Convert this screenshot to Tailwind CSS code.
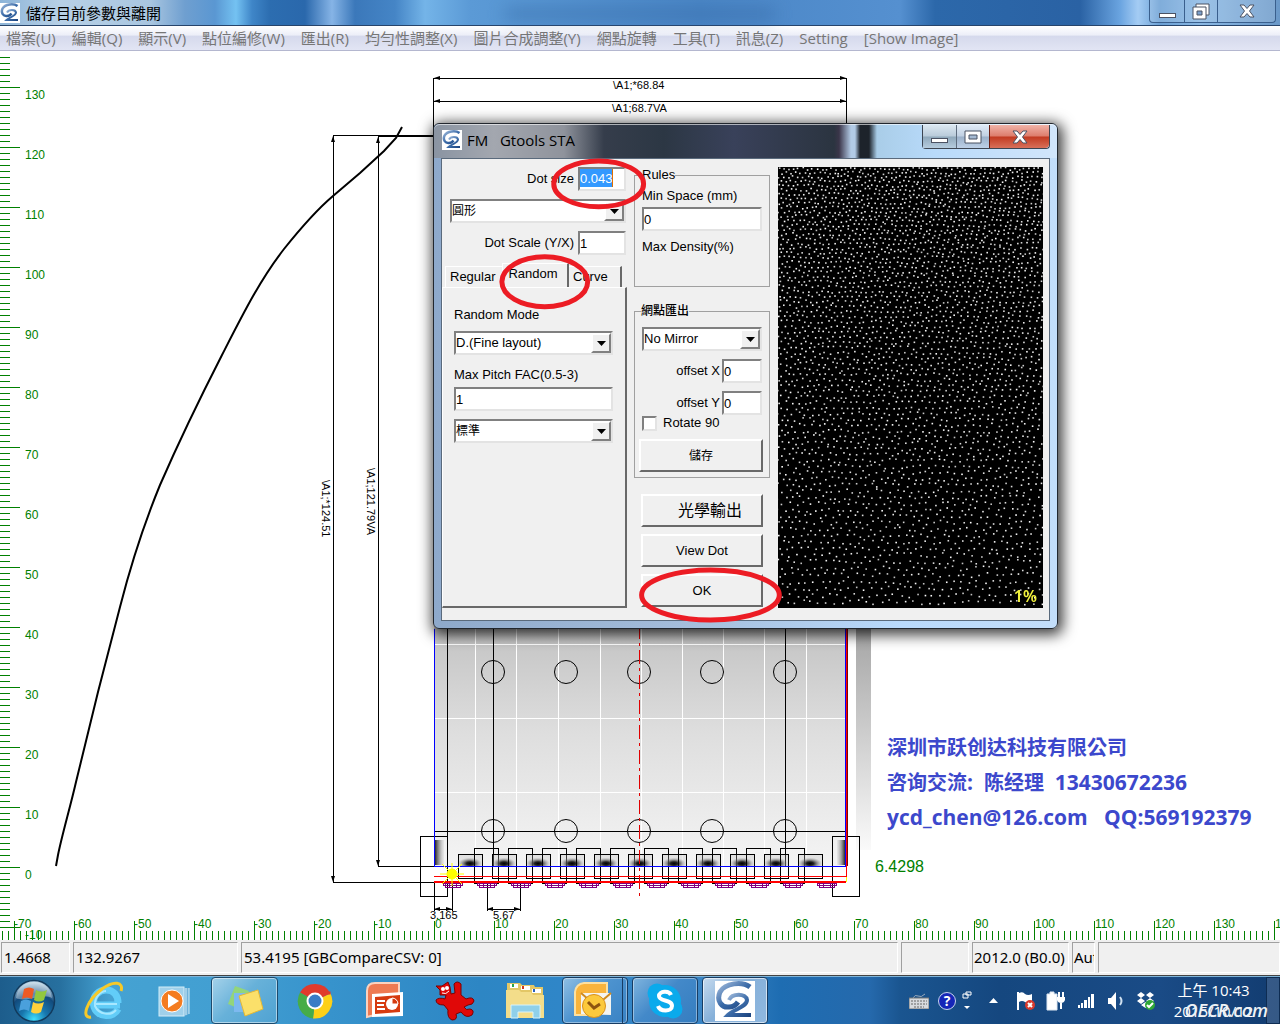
<!DOCTYPE html>
<html lang="zh-Hant">
<head>
    <meta charset="UTF-8">
    <meta name="viewport" content="width=device-width, initial-scale=1.0">
    <title>FM Gtools STA</title>
    <script src="https://cdn.jsdelivr.net/npm/@tailwindcss/browser@4"></script>
</head>
<body class="flex flex-col min-h-screen overflow-x-hidden bg-white font-['Open_Sans','Noto_Sans_CJK_TC',sans-serif] text-[15px] text-black">
    <svg class="hidden">
        <symbol id="g2" viewBox="0 0 40 40">
            <rect width="40" height="40" fill="#fff"/>
            <g fill="none" stroke="url(#g2fill)">
                <path stroke-width="5" d="M35 6C27 0 10 2 5 11C1 20 7 27 14 26C18 26 21 24 23 21"/>
                <path stroke-width="4" d="M14 19C17 12 31 12 32 19C32 26 19 28 13 34L36 34"/>
            </g>
        </symbol>
        <symbol id="cross" viewBox="0 0 16 14">
            <path d="M1 1H5L8 4.500L11 1H15L10.500 7L15 13H11L8 9.500L5 13H1L5.500 7Z" fill="#fff" stroke="#4b5263"/>
        </symbol>
    </svg>
    <svg class="absolute w-0 h-0">
        <linearGradient id="g2fill" x1="0" y1="0" x2="1" y2="1">
            <stop offset="0" stop-color="#9db8da"/><stop offset=".5" stop-color="#3b6ba8"/><stop offset="1" stop-color="#1c4480"/>
        </linearGradient>
    </svg>

    <!-- title bar -->
    <header class="relative flex items-center h-[26px] bg-[linear-gradient(90deg,#8db4d8_0px,#b7d0e6_60px,#a9c6e0_150px,#6f9fd0_185px,#5a97d2_215px,#74c2f2_236px,#3f86c8_252px,#2c6db0_270px,#2a68ac_305px,#86b4e6_332px,#3b78ba_355px,#4585c6_395px,#74b4e8_425px,#5b9ad6_470px,#4a86c6_700px,#5590d0_900px,#2c68aa_935px,#2a62a4_1080px,#6aa4e0_1120px,#a4ccf4_1138px,#6a9fd4_1160px,#8ab8e4_1200px,#6a98c8_1280px)] border-b border-[#27446b]">
        <span class="absolute left-[505px] top-2 w-[270px] h-3 bg-[#2c5f9c]/40 blur-sm"></span>
        <svg class="relative w-5 h-5"><use href="#g2"/></svg>
        <h1 class="relative ml-1.5 leading-6">儲存目前參數與離開</h1>
        <div class="relative flex self-start ml-auto mr-1 h-[23px] rounded-b border border-t-0 border-[#3a5f8d] bg-white/15">
            <button class="flex items-center justify-center w-[35px] pt-2 border-r border-[#3a5f8d]" aria-label="Minimize"><span class="w-[17px] h-[5px] bg-white border border-[#4b5263]"></span></button>
            <button class="flex items-center justify-center w-[33px] border-r border-[#3a5f8d]" aria-label="Restore">
                <svg class="w-[18px] h-[17px]" viewBox="0 0 18 17" fill="#fff" stroke="#4b5263"><path d="M4 1H17V12H4Z"/><path d="M1 4H14V16H1Z"/><path d="M5 8H10V12H5Z" fill="#7ba0cc"/></svg>
            </button>
            <button class="flex items-center justify-center w-[57px]" aria-label="Close"><svg class="w-4 h-3.5"><use href="#cross"/></svg></button>
        </div>
    </header>

    <!-- menu -->
    <nav class="flex gap-4 h-[25px] pl-1.5 leading-6 whitespace-nowrap text-[#767676] bg-[linear-gradient(#ffffff,#eceef8_38%,#d5d9ec_42%,#e2e5f4)] border-b border-[#b4b7cf]">
        <a href="#">檔案(U)</a>
        <a href="#">編輯(Q)</a>
        <a href="#">顯示(V)</a>
        <a href="#">點位編修(W)</a>
        <a href="#">匯出(R)</a>
        <a href="#">均勻性調整(X)</a>
        <a href="#">圖片合成調整(Y)</a>
        <a href="#">網點旋轉</a>
        <a href="#">工具(T)</a>
        <a href="#">訊息(Z)</a>
        <a href="#">Setting</a>
        <a href="#">[Show Image]</a>
    </nav>

    <main class="relative flex-1 min-h-[889px] overflow-hidden">
        <svg class="absolute inset-0 w-full h-full font-['Liberation_Sans',sans-serif]" viewBox="0 51 1280 890" preserveAspectRatio="xMinYMin slice">
            <defs>
                <linearGradient id="panel" x1="0" y1="0" x2="0" y2="1"><stop offset="0" stop-color="#bcbcbc"/><stop offset=".5" stop-color="#dedede"/><stop offset="1" stop-color="#f4f4f4"/></linearGradient>
                <linearGradient id="band" x1="0" y1="0" x2="0" y2="1"><stop offset="0" stop-color="#9a9a9a"/><stop offset="1" stop-color="#fafafa"/></linearGradient>
                <radialGradient id="led" cx=".5" cy=".8" r=".5"><stop offset="0" stop-color="#000"/><stop offset=".3" stop-color="#222"/><stop offset="1" stop-color="#bbb" stop-opacity=".3"/></radialGradient>
                <linearGradient id="endL"><stop offset="0" stop-color="#000"/><stop offset="1" stop-color="#bbb" stop-opacity=".2"/></linearGradient>
                <linearGradient id="endR"><stop offset="0" stop-color="#bbb" stop-opacity=".2"/><stop offset="1" stop-color="#000"/></linearGradient>
            </defs>
            <!-- light guide panel -->
            <rect x="434" y="600" width="412" height="266" fill="url(#panel)"/>
            <rect x="856" y="600" width="15" height="250" fill="url(#band)"/>
            <g stroke="#fff" stroke-width="1" shape-rendering="crispEdges">
                <path d="M475 600V866M516 600V866M558 600V866M600 600V866M641 600V866M682 600V866M723 600V866M764 600V866M806 600V866M434 644H846M434 718H846M434 792H846"/>
            </g>
            <g fill="none" stroke="#000" shape-rendering="crispEdges">
                <path d="M447 600V866M493 600V866M785 600V866M434 831H846"/>
                <path d="M420 836H447V896H420ZM832 836H859V896H832Z"/>
                <path d="M333 882V135H434M378 136V866H434M333 882H434M434 78H846M434 101H846M433 78V136M846 78V136"/>
                <path d="M378 136H434" stroke-width="2"/>
                <path d="M434 882V911M452 884V911M434 909H452M487 882V911M520 882V911M487 909H520"/>
            </g>
            <g fill="none" stroke="#000">
                <circle cx="493" cy="672" r="11.500"/><circle cx="566" cy="672" r="11.500"/><circle cx="639" cy="672" r="11.500"/><circle cx="712" cy="672" r="11.500"/><circle cx="785" cy="672" r="11.500"/>
                <circle cx="493" cy="831" r="11.500"/><circle cx="566" cy="831" r="11.500"/><circle cx="639" cy="831" r="11.500"/><circle cx="712" cy="831" r="11.500"/><circle cx="785" cy="831" r="11.500"/>
                <path stroke-width="2" d="M56 866L58 855C62 835 70 808 76 782L98 692L120 607C132 560 144 524 160 485C184 430 200 398 222 355C244 312 260 280 284 249C304 224 320 207 333 196L360 173L384 151L396 138L402 127"/>
            </g>
            <path d="M434 78l6 -2v4zM434 101l6 -2v4zM846 78l-6 -2v4zM846 101l-6 -2v4zM333 136l-2 6h4zM378 137l-2 6h4zM333 882l-2 -6h4zM378 866l-2 -6h4zM434 909l6 -2v4zM452 909l-6 -2v4zM487 909l6 -2v4zM520 909l-6 -2v4z"/>
            <rect x="434" y="840" width="10" height="25" fill="url(#endL)"/>
            <rect x="837" y="840" width="9" height="25" fill="url(#endR)"/>
            <g id="leds" fill="none" shape-rendering="crispEdges"></g>
            <g fill="none" shape-rendering="crispEdges">
                <path d="M639 600V900" stroke="#e00000" stroke-dasharray="14 4 3 4"/>
                <path d="M434 629V866H846" stroke="#00f"/>
                <path d="M434 876H847" stroke="#f00"/>
                <path d="M434 882H846" stroke="#f00" stroke-width="2"/>
            </g>
            <rect x="845" y="600" width="1" height="266" fill="#00f"/>
            <rect x="847" y="600" width="1" height="266" fill="#800000"/>
            <rect x="846" y="600" width="1" height="277" fill="#f00"/>
            <rect x="846" y="877" width="1" height="5" fill="#ff0"/>
            <g stroke="#ff0"><circle cx="452" cy="874" r="5" fill="#ff0"/><path d="M440 874H464M452 863V886M442 864L462 884M462 864L442 884"/></g>
            <g font-size="11">
                <text x="613" y="89">\A1;*68.84</text>
                <text x="612" y="112">\A1;68.7VA</text>
                <text transform="translate(322 480) rotate(90)">\A1;*124.51</text>
                <text transform="translate(367 468) rotate(90)">\A1;121.79VA</text>
                <text x="430" y="919">3.165</text>
                <text x="493" y="919">5.67</text>
            </g>
            <g id="rulers" fill="#008000" font-size="12"></g>
            <text x="875" y="872" font-size="16" fill="#008000">6.4298</text>
        </svg>

        <address class="absolute left-[887px] top-[679px] not-italic font-bold text-xl leading-[35px] whitespace-pre text-[#3c48cc] font-['Open_Sans','Noto_Sans_CJK_SC',sans-serif]">深圳市跃创达科技有限公司
咨询交流<span class="text-[21px]">:  </span>陈经理<span class="text-[21px]">  13430672236
ycd_chen@126.com   QQ:569192379</span></address>

        <!-- dialog -->
        <section class="absolute left-[433px] top-[72px] w-[625px] rounded-md border border-[#22272e] bg-[linear-gradient(90deg,#8ea9cb,#a4bddb_40%,#b9dafc_75%,#c3defa)] shadow-[2px_3px_14px_3px_rgba(0,0,0,0.75)] font-['Liberation_Sans','Noto_Sans_CJK_TC',sans-serif] text-[13px] leading-4">
            <header class="flex items-center h-[34px] pl-2 pr-[7px] pb-[3px] rounded-t-md border-t border-white/60 bg-[linear-gradient(90deg,#8a94a2_0px,#a3a7af_60px,#8f939c_130px,#353d4b_170px,#2c3744_230px,#39415a_300px,#2b3440_400px,#3a3549_405px,#b2cbe6_417px,#b2cbe6_421px,#1d232b_426px,#1d232b_435px,#a9cde8_443px,#b8dafa_500px,#d2e6fb_624px)] font-['Open_Sans',sans-serif] text-[15px]">
                <svg class="w-5 h-5"><use href="#g2"/></svg>
                <h2 class="ml-[5px] whitespace-pre">FM   Gtools STA</h2>
                <div class="flex self-start ml-auto h-6 rounded-b border border-t-0 border-[#3c4552]">
                    <button class="flex items-center justify-center w-[34px] pt-2 bg-[linear-gradient(#dbe7f1,#b9cbda_48%,#8fa8bb_52%,#b6ccde)] border-r border-[#5d6c7e]" aria-label="Minimize"><span class="w-[17px] h-[5px] bg-white border border-[#4b5263]"></span></button>
                    <button class="flex items-center justify-center w-8 bg-[linear-gradient(#dfeaf6,#c0d0e2_48%,#9bb1ca_52%,#bdd0e6)]" aria-label="Maximize">
                        <svg class="w-[18px] h-[14px]" viewBox="0 0 18 14" fill="#fff" stroke="#4b5263"><path d="M1 1H17V13H1Z"/><path d="M5 5H13V9H5Z" fill="#a5bad2"/></svg>
                    </button>
                    <button class="flex items-center justify-center w-[60px] rounded-br border-l border-[#6b1c10] bg-[linear-gradient(#f0b3a8,#dd7d6c_48%,#c23a21_52%,#d8705a)]" aria-label="Close"><svg class="w-4 h-3.5"><use href="#cross"/></svg></button>
                </div>
            </header>
            <form class="flex h-[463px] mx-[7px] mb-[7px] pt-2 border border-[#5a6a7c] bg-[#f0f0f0]">
                <div class="flex flex-col w-[192px]">
                    <div class="flex flex-col gap-2 pl-2 pr-2">
                        <div class="flex items-center justify-end gap-1">
                            <label for="dotsize">Dot size</label>
                            <div class="flex w-12 h-6 border-2 border-t-[#808080] border-l-[#808080] border-r-[#e3e3e3] border-b-[#e3e3e3] bg-white"><input id="dotsize" type="text" value="0.043" class="w-[33px] h-[18px] bg-[#3399ff] text-white border-r border-[#e07000] outline-none"></div>
                        </div>
                        <div class="flex h-6 border-2 border-t-[#808080] border-l-[#808080] border-r-[#e3e3e3] border-b-[#e3e3e3] bg-white">
                            <select aria-label="Dot shape" class="flex-1 appearance-none text-xs outline-none"><option>圓形</option></select>
                            <span class="flex items-center justify-center w-5 border-2 border-t-white border-l-white border-r-[#808080] border-b-[#808080] bg-[#f0f0f0]"><svg class="w-[9px] h-[5px]"><path d="M0 0H9L4.500 5Z"/></svg></span>
                        </div>
                        <div class="flex items-center justify-end gap-1">
                            <label for="scale">Dot Scale (Y/X)</label>
                            <input id="scale" type="text" value="1" class="w-12 h-6 border-2 border-t-[#808080] border-l-[#808080] border-r-[#e3e3e3] border-b-[#e3e3e3] bg-white">
                        </div>
                    </div>
                    <div class="flex items-end h-6 mt-2 pl-[3px]">
                        <button type="button" class="w-[57px] h-[21px] pl-1 text-left border-t border-l border-white">Regular</button>
                        <button type="button" class="w-[67px] h-6 pb-1 pr-1 border-t border-l border-white border-r-2 border-r-[#696969]">Random</button>
                        <button type="button" class="w-[53px] h-[21px] pl-1 text-left border-t border-white border-r-2 border-r-[#696969]">Curve</button>
                    </div>
                    <div class="flex flex-col h-[321px] w-[185px] pl-[11px] pr-3 pt-[19px] border-t border-l border-white border-r-2 border-r-[#696969] border-b-2 border-b-[#696969]">
                        <label for="mode">Random Mode</label>
                        <div class="flex h-6 mt-2 border-2 border-t-[#808080] border-l-[#808080] border-r-[#e3e3e3] border-b-[#e3e3e3] bg-white">
                            <select id="mode" class="flex-1 appearance-none outline-none"><option>D.(Fine layout)</option></select>
                            <span class="flex items-center justify-center w-5 border-2 border-t-white border-l-white border-r-[#808080] border-b-[#808080] bg-[#f0f0f0]"><svg class="w-[9px] h-[5px]"><path d="M0 0H9L4.500 5Z"/></svg></span>
                        </div>
                        <label for="pitch" class="mt-3">Max Pitch FAC(0.5-3)</label>
                        <input id="pitch" type="text" value="1" class="h-6 mt-1 border-2 border-t-[#808080] border-l-[#808080] border-r-[#e3e3e3] border-b-[#e3e3e3] bg-white">
                        <div class="flex h-6 mt-2 border-2 border-t-[#808080] border-l-[#808080] border-r-[#e3e3e3] border-b-[#e3e3e3] bg-white">
                            <select aria-label="Standard" class="flex-1 appearance-none text-xs outline-none"><option>標準</option></select>
                            <span class="flex items-center justify-center w-5 border-2 border-t-white border-l-white border-r-[#808080] border-b-[#808080] bg-[#f0f0f0]"><svg class="w-[9px] h-[5px]"><path d="M0 0H9L4.500 5Z"/></svg></span>
                        </div>
                    </div>
                </div>
                <div class="flex flex-col w-[136px]">
                    <fieldset class="flex flex-col h-[120px] px-[7px] border border-[#a0a0a0]">
                        <legend>Rules</legend>
                        <label for="space" class="block mt-[5px]">Min Space (mm)</label>
                        <input id="space" type="text" value="0" class="block w-full h-6 mt-[3px] border-2 border-t-[#808080] border-l-[#808080] border-r-[#e3e3e3] border-b-[#e3e3e3] bg-white">
                        <p class="mt-2">Max Density(%)</p>
                    </fieldset>
                    <fieldset class="h-[175px] mt-4 px-1 border border-[#a0a0a0]">
                        <legend class="ml-0.5 text-xs leading-4 font-medium">網點匯出</legend>
                        <div class="flex h-6 mx-[3px] mt-2 border-2 border-t-[#808080] border-l-[#808080] border-r-[#e3e3e3] border-b-[#e3e3e3] bg-white">
                            <select aria-label="Mirror" class="flex-1 appearance-none outline-none"><option>No Mirror</option></select>
                            <span class="flex items-center justify-center w-5 border-2 border-t-white border-l-white border-r-[#808080] border-b-[#808080] bg-[#f0f0f0]"><svg class="w-[9px] h-[5px]"><path d="M0 0H9L4.500 5Z"/></svg></span>
                        </div>
                        <div class="flex items-center justify-end gap-0.5 mx-[3px] mt-2">
                            <label for="offx">offset X</label>
                            <input id="offx" type="text" value="0" class="w-10 h-6 border-2 border-t-[#808080] border-l-[#808080] border-r-[#e3e3e3] border-b-[#e3e3e3] bg-white">
                        </div>
                        <div class="flex items-center justify-end gap-0.5 mx-[3px] mt-2">
                            <label for="offy">offset Y</label>
                            <input id="offy" type="text" value="0" class="w-10 h-6 border-2 border-t-[#808080] border-l-[#808080] border-r-[#e3e3e3] border-b-[#e3e3e3] bg-white">
                        </div>
                        <div class="flex items-center gap-1.5 ml-[3px]">
                            <input id="rot" type="checkbox" class="appearance-none w-[15px] h-[15px] border-2 border-t-[#808080] border-l-[#808080] border-r-[#e3e3e3] border-b-[#e3e3e3] bg-white">
                            <label for="rot">Rotate 90</label>
                        </div>
                        <button type="button" class="w-[124px] h-[33px] mt-2 text-xs border-2 border-t-white border-l-white border-r-[#696969] border-b-[#696969]">儲存</button>
                    </fieldset>
                    <div class="flex flex-col gap-[7px] mt-4 pl-[7px] pr-[7px]">
                        <button type="button" class="h-[33px] pl-4 text-base border-2 border-t-white border-l-white border-r-[#696969] border-b-[#696969]">光學輸出</button>
                        <button type="button" class="h-[33px] border-2 border-t-white border-l-white border-r-[#696969] border-b-[#696969]">View Dot</button>
                        <button type="button" class="h-[33px] border-2 border-t-white border-l-white border-r-[#696969] border-b-[#696969]">OK</button>
                    </div>
                </div>
                <div class="relative w-[265px] h-[441px] ml-2 bg-black">
                    <canvas id="dots" width="265" height="441" class="block"></canvas>
                    <span class="absolute right-1.5 bottom-1 font-['Noto_Sans',sans-serif] font-semibold text-base leading-4 text-[#f0f03c]">1%</span>
                </div>
            </form>
            <svg class="absolute left-0 top-0 w-full h-full pointer-events-none" viewBox="434 124 623 505" fill="none" stroke="#ec1c24" stroke-width="5" preserveAspectRatio="xMinYMin">
                <ellipse cx="599" cy="184" rx="45" ry="23"/>
                <ellipse cx="545" cy="282" rx="43" ry="25"/>
                <ellipse cx="711" cy="596" rx="69" ry="25"/>
            </svg>
        </section>
    </main>

    <!-- status bar -->
    <div class="flex gap-[3px] h-9 pt-0.5 pb-0.5 pl-px bg-[#f0f0f0] font-['Noto_Sans',sans-serif] leading-[29px] whitespace-nowrap border-b border-[#444]">
        <div class="w-[69px] pl-0.5 border border-t-[#a0a0a0] border-l-[#a0a0a0] border-r-white border-b-white">1.4668</div>
        <div class="w-[165px] pl-0.5 border border-t-[#a0a0a0] border-l-[#a0a0a0] border-r-white border-b-white">132.9267</div>
        <div class="flex-1 pl-0.5 border border-t-[#a0a0a0] border-l-[#a0a0a0] border-r-white border-b-white">53.4195 [GBCompareCSV: 0]</div>
        <div class="w-[68px] border border-t-[#a0a0a0] border-l-[#a0a0a0] border-r-white border-b-white"></div>
        <div class="w-[97px] pl-px border border-t-[#a0a0a0] border-l-[#a0a0a0] border-r-white border-b-white">2012.0 (B0.0)</div>
        <div class="w-[23px] overflow-hidden pl-px border border-t-[#a0a0a0] border-l-[#a0a0a0] border-r-white border-b-white">Aut</div>
        <div class="w-[182px] border border-t-[#a0a0a0] border-l-[#a0a0a0] border-r-white border-b-white"></div>
    </div>

    <!-- taskbar -->
    <footer class="flex gap-1 h-12 bg-[linear-gradient(90deg,#1d5d8c_0px,#27709f_60px,#45a2d2_110px,#429fd2_220px,#3793cc_330px,#2d86c4_480px,#2f86c8_560px,#3a84c4_720px,#1e6db2_780px,#2569ac_870px,#1a5590_900px,#15477f_1000px,#1a4b86_1160px,#123c70_1280px)] border-t border-[#7fb4d8]">
        <button class="flex items-center justify-center w-[67px]" aria-label="Start">
            <svg class="w-11 h-11" viewBox="0 0 44 44">
                <defs><radialGradient id="orb" cx=".5" cy=".95" r=".9"><stop offset="0" stop-color="#3fe0ff"/><stop offset=".35" stop-color="#1877ae"/><stop offset=".7" stop-color="#124a7c"/><stop offset="1" stop-color="#b0cde0"/></radialGradient></defs>
                <circle cx="22" cy="22" r="20.500" fill="url(#orb)" stroke="#123a5c" stroke-width="1.500"/>
                <path d="M4 19C5 8 14 3 22 3S39 8 40 19C30 14 14 24 4 19Z" fill="#fff" opacity=".35"/>
                <path d="M12 10Q17 7 22 10L20 20Q15 17 10 20Z" fill="#ee5a24"/><path d="M24 11Q29 14 35 11L32 21Q27 24 22 21Z" fill="#92c83e"/>
                <path d="M9 22Q14 19 19 22L17 32Q12 29 7 32Z" fill="#4aa0dc"/><path d="M21 23Q26 26 32 23L29 33Q24 36 19 33Z" fill="#fdd03b"/>
            </svg>
        </button>
        <button class="flex items-center justify-center w-[66px]" aria-label="Internet Explorer">
            <svg class="w-10 h-10" viewBox="0 0 40 40" fill="none">
                <path d="M36 24H12M34 28C30 37 14 37 10 26C7 14 16 9 22 9C30 9 34 15 34 22" stroke="#62cdf8" stroke-width="7"/>
                <path d="M33 23H12M32 29C27 35 15 34 11 25C10 16 17 10 22 10" stroke="#a8e8ff" stroke-width="2"/>
                <path d="M7 36C-3 38 2 20 18 8C30 -1 40 1 37 10" stroke="#f6c928" stroke-width="3"/>
            </svg>
        </button>
        <button class="flex items-center justify-center w-[66px]" aria-label="Media Player">
            <svg class="w-9 h-9" viewBox="0 0 36 36"><path d="M6 5H33V31L29 33H6Z" fill="#6fb1d8"/><path d="M30 5V32M33 5V31" stroke="#d4edf8"/><rect x="3" y="4" width="25" height="29" fill="#9fd0ea" stroke="#d4edf8"/><circle cx="16" cy="18" r="11" fill="#f47c20" stroke="#fff"/><path d="M12 11L23 18L12 25Z" fill="#fff"/></svg>
        </button>
        <button class="flex items-center justify-center w-[67px] rounded-sm border border-[#1c4a6d] bg-[linear-gradient(135deg,#a5d2ea,#67b1d9_45%,#4fa2d2)] inset-ring inset-ring-white/50" aria-label="Sticky Notes">
            <svg class="w-10 h-9" viewBox="0 0 40 36"><path d="M10 3L24 8L17 27L3 21Z" fill="#93d57b"/><path d="M9 10H26V29H9Z" fill="#7db9f0"/><path d="M14 13L33 7L38 26L20 33Z" fill="#fbe06a" stroke="#e6b933"/></svg>
        </button>
        <button class="flex items-center justify-center w-[66px]" aria-label="Chrome">
            <svg class="w-9 h-9" viewBox="0 0 36 36"><path d="M18 18L3 9.500A17.500 17.500 0 0 1 33.500 10.500Z" fill="#e03a2c"/><path d="M18 18L33.500 10.500A17.500 17.500 0 0 1 16 35.500Z" fill="#fdd017"/><path d="M18 18L16 35.500A17.500 17.500 0 0 1 3 9.500Z" fill="#46ac48"/><path d="M18 10H33.500" stroke="#e03a2c" stroke-width="3"/><circle cx="18" cy="18" r="8.500" fill="#fff"/><circle cx="18" cy="18" r="6.500" fill="#3a7cc6"/></svg>
        </button>
        <button class="flex items-center justify-center w-[66px]" aria-label="PowerPoint">
            <svg class="w-10 h-10" viewBox="0 0 40 40"><path d="M2 36V10Q2 2 10 2H34V12L10 34Z" fill="#ee7a52" stroke="#fbd2bf" stroke-width="2"/><path d="M7 13L38 11V35L7 36Z" fill="#fff"/><path d="M10 16L35 14V31L10 33Z" fill="#d63b10"/><path d="M12 20H20M12 24H19M12 28H20" stroke="#fff" stroke-width="2"/><circle cx="27" cy="23" r="6" fill="#fff"/><path d="M27 23V17A6 6 0 0 1 33 23Z" fill="#d63b10" stroke="#fff"/></svg>
        </button>
        <button class="flex items-center justify-center w-[66px]" aria-label="IrfanView">
            <svg class="w-10 h-10" viewBox="0 0 40 40"><path d="M1 5L7 5L13 1L15 6L16 13L20 12L19 3Q22 -1 26 3L26 14L31 18Q38 15 39 20Q38 24 33 24L29 26Q31 30 35 28Q40 29 37 34Q31 38 26 31L21 33Q23 39 17 39Q12 37 13 29L9 24Q1 24 1 19Q4 16 10 18L11 14L5 14L5 9Z" fill="#e00808" stroke="#7c0000"/><circle cx="8" cy="8" r="2" fill="#fff"/><circle cx="12" cy="7" r="2" fill="#fff"/><path d="M7 12Q11 14 14 10" stroke="#fff" fill="none"/></svg>
        </button>
        <button class="flex items-center justify-center w-[66px]" aria-label="Explorer">
            <svg class="w-10 h-10" viewBox="0 0 40 40"><path d="M2 8V2H15L17 4H29L30 6H38V37H2Z" fill="#e3c766"/><path d="M5 3H13V7H5ZM16 5H25V9H16ZM27 8H36V12H27Z" fill="#fff"/><path d="M7 3H9V6H7Z" fill="#2aa44a"/><path d="M17 5H19V8H17Z" fill="#d2381c"/><path d="M28 8H30V11H28Z" fill="#2860c0"/><path d="M1 9H14L16 11H26L28 14H39V37H1Z" fill="#f3dd8a"/><path d="M6 24H35V37H28V31H13V37H6Z" fill="#8fd0ea" stroke="#d8f3fb"/></svg>
        </button>
        <button class="flex items-center w-[66px] rounded-sm border border-[#173c63] bg-[linear-gradient(135deg,#8fbfe4,#4d93cf_45%,#3982c4)] inset-ring inset-ring-white/40" aria-label="Outlook">
            <span class="flex items-center justify-center flex-1 h-full border-r border-[#173c63]">
                <svg class="w-10 h-10" viewBox="0 0 40 40"><path d="M2 34V11Q3 3 11 2H34V18L18 34Z" fill="#f9b43c" stroke="#fde0a0" stroke-width="2"/><path d="M8 12H38V34L8 33Z" fill="#f4f4f0"/><path d="M8 12L23 25L38 12" fill="none" stroke="#d08a1e" stroke-width="2"/><circle cx="21" cy="25" r="11.500" fill="#fcc93c" stroke="#d8901c"/><path d="M15 21L21 27L27 23" fill="none" stroke="#8e5510" stroke-width="3"/></svg>
            </span>
            <span class="w-1"></span>
        </button>
        <button class="flex items-center justify-center w-[66px] rounded-sm border border-[#173c63] bg-[linear-gradient(135deg,#7fb4de,#4389c9_45%,#357dc0)] inset-ring inset-ring-white/40" aria-label="Skype">
            <svg class="w-9 h-9" viewBox="0 0 36 36"><circle cx="18" cy="18" r="16" fill="#0aaaec"/><circle cx="10" cy="10" r="9.500" fill="#0aaaec"/><circle cx="26" cy="26" r="9.500" fill="#0aaaec"/><path d="M24 12C22 7 12 8 12 13C12 19 25 16 25 23C25 29 13 29 11 23" fill="none" stroke="#fff" stroke-width="4"/></svg>
        </button>
        <button class="flex items-center justify-center w-[66px] rounded-sm border border-[#173c63] bg-[linear-gradient(135deg,#c5daee,#86b0d9_45%,#8fb8e0)] inset-ring inset-ring-white/60" aria-label="Gtools"><svg class="w-10 h-10"><use href="#g2"/></svg></button>

        <div class="flex items-center ml-auto text-white">
            <span class="flex justify-center w-8"><svg class="w-5 h-4" viewBox="0 0 20 16"><path d="M4 5Q6 1 9 3T16 1" fill="none" stroke="#9ab" /><rect x="0" y="5" width="20" height="11" fill="#d7dade" stroke="#777"/><path d="M2 8H18M2 11H18M5 14H15" stroke="#666" stroke-dasharray="2 1"/></svg></span>
            <span class="flex justify-center w-6"><span class="flex items-center justify-center w-[18px] h-[18px] rounded-full border border-[#c8d4ee] bg-[#1526b8] text-sm font-bold leading-4">?</span></span>
            <span class="flex justify-center w-4"><svg class="w-2.5 h-5" viewBox="0 0 10 20" fill="none" stroke="#fff"><path d="M4 1H9V4H4ZM1 3H6V7H1Z"/><path d="M2 15H8L5 18Z" fill="#fff" stroke="none"/></svg></span>
            <button class="flex justify-center w-9" aria-label="Show hidden icons"><svg class="w-[9px] h-[5px]"><path d="M0 5L4.500 0L9 5Z" fill="#fff"/></svg></button>
            <span class="flex justify-center w-[30px]"><svg class="w-5 h-5" viewBox="0 0 20 20"><path d="M2 1V19" stroke="#fff" stroke-width="2"/><path d="M3 2Q7 0 9 3Q12 5 16 3V11Q12 13 9 11Q6 9 3 11Z" fill="#fff"/><circle cx="14" cy="14" r="5" fill="#d83a2e"/><path d="M12 12L16 16M16 12L12 16" stroke="#fff" stroke-width="2"/></svg></span>
            <span class="flex justify-center w-[30px]"><svg class="w-5 h-5" viewBox="0 0 20 20"><path d="M4 1H8V3H11V19H1V3H4Z" fill="#fff" stroke="#dfe8f2"/><path d="M13 1V6M17 1V6" stroke="#fff" stroke-width="2"/><path d="M11 6H19V9Q18 12 15 12Q12 12 11 9Z" fill="#fff"/><path d="M15 12V18" stroke="#fff" stroke-width="2"/></svg></span>
            <span class="flex justify-center w-[30px]"><svg class="w-4 h-3.5" viewBox="0 0 16 14" fill="#fff"><path d="M0 11H2V14H0ZM3 9H5V14H3ZM6 6H9V14H6ZM10 3H12V14H10ZM13 0H16V14H13Z"/></svg></span>
            <span class="flex justify-center w-[30px]"><svg class="w-4 h-[18px]" viewBox="0 0 16 18"><path d="M0 6H3L8 0V18L3 12H0Z" fill="#fff"/><path d="M12 5Q15 9 12 13" fill="none" stroke="#cfe0f0" stroke-width="2"/></svg></span>
            <span class="flex justify-center w-[30px]"><svg class="w-5 h-[18px]" viewBox="0 0 20 18"><path d="M5 0L9 3L5 6L1 3ZM14 0L18 3L14 6L10 3ZM5 6L9 9L5 12L1 9ZM14 6L18 9L14 12L10 9ZM5 13L9.500 10L14 13L9.500 16Z" fill="#fff"/><circle cx="14" cy="13" r="5" fill="#2fa836"/><path d="M11 13L13 15L17 11" stroke="#fff" stroke-width="2" fill="none"/></svg></span>
            <div class="relative flex flex-col items-center w-[105px] leading-[21px]">
                <span>上午 10:43</span>
                <span>2015/10/12</span>
                <span class="absolute -right-0.5 bottom-0 font-semibold italic text-lg leading-6 text-[#eef2f6]">OECR.com</span>
            </div>
            <button class="w-3.5 h-full border border-[#0e2c52] bg-white/15" aria-label="Show desktop"></button>
        </div>
    </footer>

    <script>
        // rulers, 6px per unit, origin at (434, 867)
        let ticks = "", labels = "";
        for (let u = -10; u <= 135; u++) {
            const y = 867 - u * 6;
            ticks += `M0 ${y}H${u % 10 == 0 ? 20 : 10}`;
            if (u % 10 == 0) labels += `<text x="25" y="${y + 12}">${u}</text>`;
        }
        for (let u = -72; u <= 141; u++) {
            const x = 434 + u * 6;
            ticks += `M${x} ${u % 10 == 0 ? 921 : 931}V940`;
            if (u % 10 == 0) labels += `<text x="${x + (u < 0 ? 0 : 1)}" y="928">${u}</text>`;
        }
        document.getElementById("rulers").innerHTML = `<path d="${ticks}" stroke="#008000" shape-rendering="crispEdges"/>` + labels;

        // LED bar
        let leds = "";
        for (let i = 0; i < 12; i++) {
            const x = 443 + i * 34;
            leds += `<path d="M${x} 883H${x + 19}M${x + 2} 884V887H${x + 17}V884M${x} 885H${x + 19}M${x + 6} 883V888M${x + 13} 883V888M${x} 883V886M${x + 19} 883V886" stroke="#800080"/>`;
            if (i < 11) leds += `<rect x="${x + 15}" y="854" width="24" height="12" fill="url(#led)"/><rect x="${x + 15}" y="854" width="24" height="24" stroke="#000"/>`;
            if (i < 10) leds += `<rect x="${x + 31}" y="848" width="24" height="35" stroke="#000"/>`;
        }
        document.getElementById("leds").innerHTML = leds;

        // random dot preview, spacing grows towards the bottom
        const ctx = document.getElementById("dots").getContext("2d");
        let seed = 7;
        function rnd() {
            seed = (seed * 16807) % 2147483647;
            return seed / 2147483647;
        }
        let row = 0;
        for (let y = 1; y < 441; row++) {
            const s = 4.8 + y / 441 * 3.2;
            for (let x = (row % 2) * s / 2; x < 265; x += s) {
                const g = Math.floor(190 + rnd() * 65);
                ctx.fillStyle = `rgb(${g},${g},${g})`;
                ctx.fillRect(x + (rnd() - 0.5) * s * 0.45, y + (rnd() - 0.5) * s * 0.6, 1.6, 1.6);
            }
            y += s * 0.87;
        }
    </script>
</body>
</html>
